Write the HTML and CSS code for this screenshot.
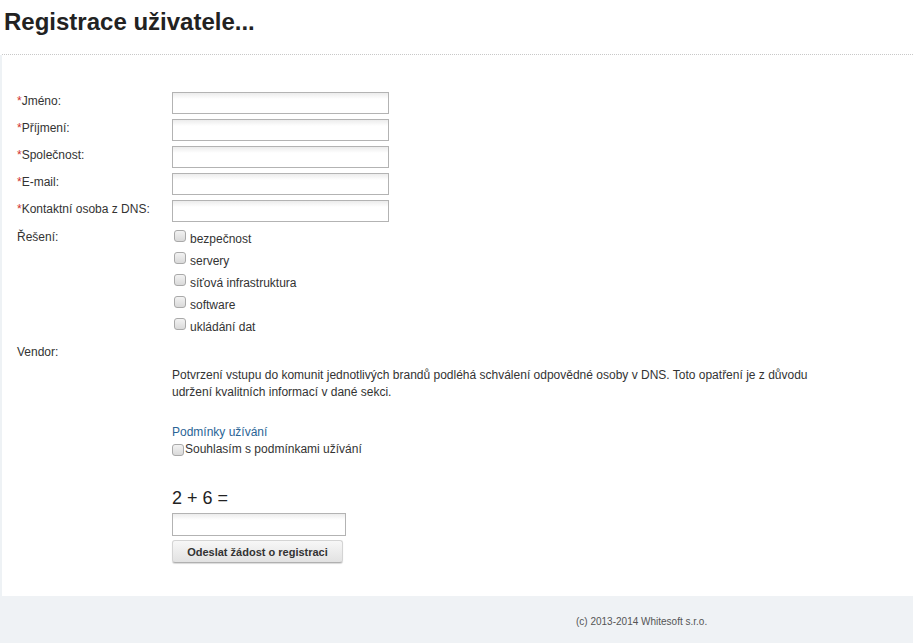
FILE: index.html
```html
<!DOCTYPE html>
<html lang="cs">
<head>
<meta charset="utf-8">
<title>Registrace uživatele</title>
<link rel="stylesheet" href="styles.css">
</head>
<body>
<header class="page-header">
  <h1 class="page-title">Registrace uživatele...</h1>
</header>
<main class="content">
  <form class="reg-form">
    <div class="row">
      <label class="label"><span class="req">*</span>Jméno:</label>
      <input class="text-input" type="text">
    </div>
    <div class="row">
      <label class="label"><span class="req">*</span>Příjmení:</label>
      <input class="text-input" type="text">
    </div>
    <div class="row">
      <label class="label"><span class="req">*</span>Společnost:</label>
      <input class="text-input" type="text">
    </div>
    <div class="row">
      <label class="label"><span class="req">*</span>E-mail:</label>
      <input class="text-input" type="text">
    </div>
    <div class="row">
      <label class="label"><span class="req">*</span>Kontaktní osoba z DNS:</label>
      <input class="text-input" type="text">
    </div>
    <div class="row row-check">
      <span class="label label-check">Řešení:</span>
      <ul class="check-list">
        <li><label class="check-item"><input class="check" type="checkbox"><span>bezpečnost</span></label></li>
        <li><label class="check-item"><input class="check" type="checkbox"><span>servery</span></label></li>
        <li><label class="check-item"><input class="check" type="checkbox"><span>síťová infrastruktura</span></label></li>
        <li><label class="check-item"><input class="check" type="checkbox"><span>software</span></label></li>
        <li><label class="check-item"><input class="check" type="checkbox"><span>ukládání dat</span></label></li>
      </ul>
    </div>
    <div class="row row-vendor">
      <span class="label">Vendor:</span>
    </div>
    <div class="extra">
      <p class="note">Potvrzení vstupu do komunit jednotlivých brandů podléhá schválení odpovědné osoby v DNS. Toto opatření je z důvodu udržení kvalitních informací v dané sekci.</p>
      <a class="terms-link" href="#">Podmínky užívání</a>
      <label class="agree"><input class="check check-agree" type="checkbox"><span>Souhlasím s podmínkami užívání</span></label>
      <div class="captcha">2 + 6 =</div>
      <input class="text-input captcha-input" type="text">
      <button class="submit" type="button">Odeslat žádost o registraci</button>
    </div>
  </form>
</main>
<footer class="page-footer">
  <span class="copy">(c) 2013-2014 Whitesoft s.r.o.</span>
</footer>
</body>
</html>
```
FILE: styles.css
```css
html, body {
  margin: 0;
  padding: 0;
  background: #fff;
  font-family: Arial, "Liberation Sans", sans-serif;
  font-size: 12px;
  color: #333;
}

.page-header {
  height: 54px;
  border-bottom: 1px dotted #c8c8c8;
  margin-left: 2px;
}

.page-title {
  margin: 0;
  padding: 8px 0 0 2px;
  font-size: 24px;
  line-height: 28px;
  font-weight: bold;
  color: #222;
}

.content {
  border-left: 2px solid #eef2f5;
  padding: 37px 0 33px 15px;
}

.reg-form {
  display: flex;
  flex-direction: column;
}

.row {
  display: flex;
  align-items: flex-start;
}

.label {
  width: 155px;
  flex: none;
  line-height: 16px;
  padding-top: 1px;
}

.req {
  color: #d2322d;
}

.text-input {
  box-sizing: border-box;
  width: 217px;
  height: 22px;
  margin: 0 0 5px 0;
  padding: 2px 4px;
  border: 1px solid #b3b3b3;
  background: linear-gradient(#ececec, #fff 6px);
  font-family: inherit;
  font-size: 12px;
  border-radius: 0;
  outline: none;
}

.row-check .label-check {
  line-height: 18px;
}

.check-list {
  list-style: none;
  margin: 0;
  padding: 0;
}

.check-list li {
  height: 22px;
}

.check-item {
  display: flex;
  align-items: center;
  height: 22px;
  margin-left: 2px;
}

.check-item span {
  margin-left: 4px;
  line-height: 16px;
  padding-top: 1px;
}

.check {
  -webkit-appearance: none;
  appearance: none;
  box-sizing: border-box;
  width: 12px;
  height: 12px;
  margin: -4px 0 0 0;
  border: 1px solid #a9a9a9;
  border-radius: 3px;
  background: linear-gradient(#f2f2f2, #d9d9d9);
  flex: none;
}

.row-vendor {
  margin-top: 4px;
}

.row-vendor .label {
  line-height: 20px;
}

.extra {
  margin-left: 155px;
  display: flex;
  flex-direction: column;
  align-items: flex-start;
}

.note {
  margin: 5px 0 23px 0;
  max-width: 665px;
  line-height: 17px;
}

.terms-link {
  color: #2a6496;
  text-decoration: none;
  line-height: 17px;
}

.agree {
  display: flex;
  align-items: center;
  line-height: 17px;
}

.check-agree {
  margin: 0 1px 0 0;
}

.captcha {
  margin-top: 29px;
  font-size: 18px;
  line-height: 22px;
  color: #222;
}

.captcha-input {
  margin-top: 4px;
  width: 174px;
  height: 23px;
  margin-bottom: 4px;
}

.submit {
  box-sizing: border-box;
  width: 171px;
  height: 23px;
  padding: 0;
  border: 1px solid #d4d4d4;
  border-bottom-color: #b0b0b0;
  border-radius: 3px;
  background: linear-gradient(#f7f7f7, #e2e2e2);
  box-shadow: 0 1px 1px rgba(0,0,0,0.15);
  font-family: inherit;
  font-size: 11px;
  font-weight: bold;
  color: #333;
}

.page-footer {
  background: #eff2f5;
  height: 47px;
  display: flex;
  align-items: center;
  padding-left: 576px;
  padding-top: 3px;
  box-sizing: border-box;
}

.copy {
  font-size: 10px;
  color: #555;
}
```
